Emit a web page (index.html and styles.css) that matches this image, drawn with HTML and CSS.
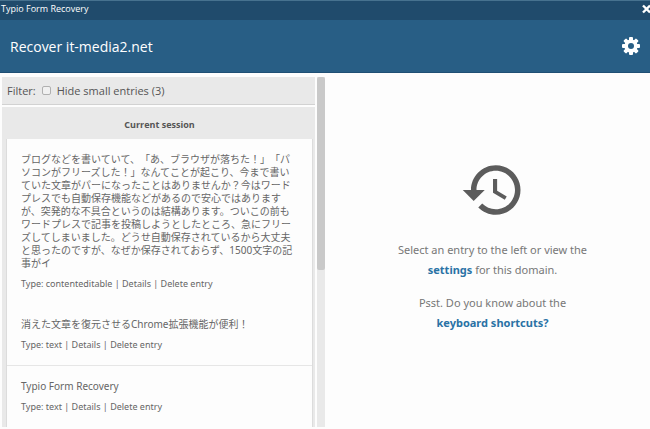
FILE: index.html
```html
<!DOCTYPE html>
<html lang="ja">
<head>
  <meta charset="UTF-8" />
  <meta name="viewport" content="width=device-width, initial-scale=1.0"/>
  <title>Typio Form Recovery</title>
  <link rel="stylesheet" href="styles.css">
</head>
<body>

<div class="titlebar">
  <span>Typio Form Recovery</span>
  <button class="close" type="button" aria-label="Close">
    <svg width="8" height="10" viewBox="0 0 8 10"><path d="M1 1.5L8 8.5M8 1.5L1 8.5" stroke="#fff" stroke-width="2.4"/></svg>
  </button>
</div>

<header class="header">
  <h1>Recover it-media2.net</h1>
  <button class="gear" type="button" aria-label="Settings">
    <svg width="18" height="18" viewBox="0 0 18 18">
      <g fill="#fff">
        <rect id="tooth" x="7" y="0" width="4" height="18" rx="1"/>
        <use href="#tooth" transform="rotate(45 9 9)"/>
        <use href="#tooth" transform="rotate(90 9 9)"/>
        <use href="#tooth" transform="rotate(135 9 9)"/>
        <circle cx="9" cy="9" r="6.6"/>
      </g>
      <circle cx="9" cy="9" r="3" fill="#285e85"/>
    </svg>
  </button>
</header>

<main class="main">
  <section class="sidebar">
    <div class="list">
      <div class="filter">
        <span>Filter:</span>
        <input type="checkbox" id="hide-small">
        <label for="hide-small">Hide small entries (3)</label>
      </div>

      <div class="session">
        <h2>Current session</h2>
        <ul class="entries">
          <li class="entry">
            <p class="text">ブログなどを書いていて、「あ、ブラウザが落ちた！」「パソコンがフリーズした！」なんてことが起こり、今まで書いていた文章がパーになったことはありませんか？今はワードプレスでも自動保存機能などがあるので安心ではありますが、突発的な不具合というのは結構あります。ついこの前もワードプレスで記事を投稿しようとしたところ、急にフリーズしてしまいました。どうせ自動保存されているから大丈夫と思ったのですが、なぜか保存されておらず、1500文字の記事がイ</p>
            <p class="meta">Type: contenteditable | <a href="#">Details</a> | <a href="#">Delete entry</a></p>
          </li>
          <li class="entry">
            <p class="text">消えた文章を復元させるChrome拡張機能が便利！</p>
            <p class="meta">Type: text | <a href="#">Details</a> | <a href="#">Delete entry</a></p>
          </li>
          <li class="entry">
            <p class="text">Typio Form Recovery</p>
            <p class="meta">Type: text | <a href="#">Details</a> | <a href="#">Delete entry</a></p>
          </li>
        </ul>
      </div>
    </div>
    <div class="track"><div class="thumb"></div></div>
  </section>

  <section class="intro">
    <svg class="history" width="66" height="66" viewBox="0 0 24 24"><path fill="#5c5c5c" d="M13 3c-4.97 0-9 4.03-9 9H1l3.89 3.89.07.14L9 12H6c0-3.87 3.13-7 7-7s7 3.13 7 7-3.13 7-7 7c-1.93 0-3.68-.79-4.94-2.06l-1.42 1.42C8.27 19.99 10.51 21 13 21c4.97 0 9-4.03 9-9s-4.03-9-9-9zm-1 5v5l4.28 2.54.72-1.21-3.5-2.08V8H12z"/></svg>
    <p>Select an entry to the left or view the<br><a href="#">settings</a> for this domain.</p>
    <p>Psst. Do you know about the<br><a href="#">keyboard shortcuts?</a></p>
  </section>
</main>

</body>
</html>
```
FILE: styles.css
```css
* {
  box-sizing: border-box;
}

body {
  margin: 0;
  height: 100vh;
  overflow: hidden;
  display: flex;
  flex-direction: column;
  font-family: "Open Sans", "Noto Sans CJK JP", sans-serif;
  font-size: 11px;
  color: #666;
  background: #fdfdfd;
  text-spacing-trim: space-all;
}

h1, h2, p, ul {
  margin: 0;
  padding: 0;
}

button {
  display: flex;
  padding: 0;
  border: 0;
  background: none;
  cursor: pointer;
}

.titlebar {
  display: flex;
  justify-content: space-between;
  align-items: center;
  height: 20px;
  padding: 0 0 4px 1px;
  color: #fff;
  font-size: 9px;
  background: #204b6c;
  border-top: 1px solid #47728f;
}

.header {
  display: flex;
  justify-content: space-between;
  align-items: center;
  height: 53px;
  padding: 0 10px;
  background: #285e85;
  border-bottom: 1px solid #1f4f74;
}

.header h1 {
  color: #fff;
  font-size: 14px;
  font-weight: 400;
}

.main {
  flex: 1;
  display: flex;
  min-height: 0;
  padding-bottom: 2px;
}

.sidebar {
  width: 50%;
  display: flex;
  gap: 2px;
  padding: 4px 0 0 2px;
}

.list {
  flex: 1;
  display: flex;
  flex-direction: column;
  gap: 2px;
}

.filter {
  display: flex;
  align-items: center;
  height: 28px;
  padding: 0 5px;
  background: #e9e9e9;
  border-bottom: 1px solid #d2d2d2;
  color: #555;
}

.filter input {
  width: 9px;
  height: 9px;
  margin: 0 6px;
  appearance: none;
  background: #f0f0f0;
  border: 1px solid #b0b0b0;
  border-radius: 2px;
}

.session {
  flex: 1;
  min-height: 0;
  overflow: hidden;
  padding: 0 2px 0 4px;
  background: #e9e9e9;
}

.session h2 {
  padding: 11px 0 7px;
  font-size: 9px;
  line-height: 14px;
  text-align: center;
  color: #555;
}

.entries {
  list-style: none;
  font-family: "Noto Sans", "Noto Sans CJK JP", sans-serif;
  background: #fdfdfd;
  border: 1px solid #dcdcdc;
  border-top: 0;
}

.entry {
  padding: 14px;
}

.entry + .entry + .entry {
  border-top: 1px solid #e6e6e6;
}

.text {
  font-size: 10px;
  line-height: 13px;
}

.meta {
  margin-top: 8px;
  font-size: 9px;
  line-height: 12px;
}

.meta a {
  color: inherit;
  text-decoration: none;
}

.track {
  width: 8px;
  background: #e9e9e9;
}

.thumb {
  height: 55%;
  background: #c9c9c9;
  border-radius: 2px;
}

.intro {
  width: 50%;
  display: flex;
  flex-direction: column;
  align-items: center;
  justify-content: center;
  gap: 13px;
  padding: 0 0 10px 10px;
  font-family: "Noto Sans", sans-serif;
  text-align: center;
  line-height: 20px;
  color: #777;
}

.history {
  margin-bottom: 4px;
}

.intro a {
  color: #2a72a5;
  font-weight: 700;
  text-decoration: none;
}
```
